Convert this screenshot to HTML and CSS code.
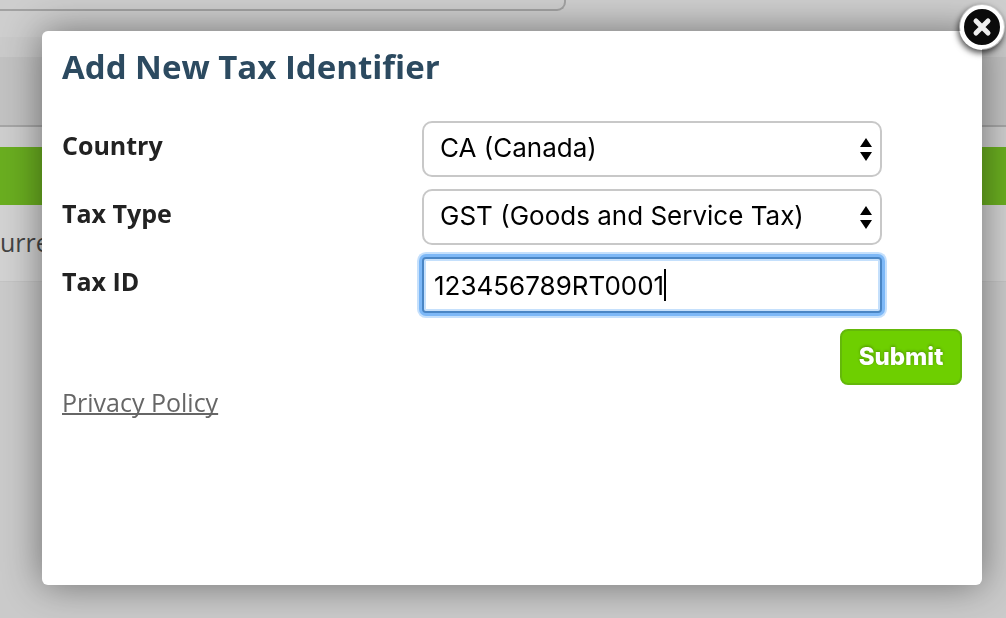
FILE: index.html
```
<!DOCTYPE html>
<html lang="en">
    <head>
        <title>Add New Tax Identifier</title>
        <meta charset="UTF-8">
        <meta name="viewport" content="width=device-width, initial-scale=1">
        <link rel="stylesheet" href="styles.css">
    </head>

    <body>
        <!-- page behind the dialog -->
        <div class="page" aria-hidden="true">
            <div class="searchBox"></div>
            <div class="toolbar"></div>
            <div class="greenBar"></div>
            <div class="currentRow">urrent</div>
        </div>

        <div class="overlay">
            <main class="dialog" role="dialog" aria-labelledby="dialogTitle">
                <button type="button" class="closeButton" aria-label="Close">
                    <svg viewBox="0 0 46 46" width="46" height="46">
                        <circle cx="23" cy="23" r="20" fill="#0b0b0b" stroke="#fff" stroke-width="4"/>
                        <path d="M17 17L29 29M29 17L17 29" stroke="#eee" stroke-width="5" stroke-linecap="round"/>
                    </svg>
                </button>

                <h1 id="dialogTitle">Add New Tax Identifier</h1>

                <form>
                    <div class="formRow">
                        <label for="country">Country</label>
                        <select id="country">
                            <option>CA (Canada)</option>
                        </select>
                    </div>
                    <div class="formRow">
                        <label for="taxType">Tax Type</label>
                        <select id="taxType">
                            <option>GST (Goods and Service Tax)</option>
                        </select>
                    </div>
                    <div class="formRow">
                        <label for="taxId">Tax ID</label>
                        <div class="textBox">
                            <input type="text" id="taxId" value="123456789RT0001">
                            <span class="caret"></span>
                        </div>
                    </div>
                    <div class="buttonRow">
                        <button type="submit" class="submitButton">Submit</button>
                    </div>
                </form>

                <a href="#" class="privacyLink">Privacy Policy</a>
            </main>
        </div>
    </body>
</html>
```
FILE: styles.css
```
*
{
    box-sizing: border-box;
}

html, body
{
    margin: 0;
    height: 100%;
    overflow: hidden;
    background-color: #cacaca;
    font-family: "Open Sans", "Noto Sans", sans-serif;
}

.page
{
    background-color: #cecece;
}

.searchBox
{
    width: 566px;
    height: 11px;
    border: 2px solid #a2a2a2;
    border-top: none;
    border-left: none;
    border-bottom-right-radius: 9px;
}

.toolbar
{
    height: 90px;
    margin-top: 26px;
    background: linear-gradient(#cacaca 20px, #c2c2c2 20px);
    border-bottom: 2px solid #a6a6a6;
}

.greenBar
{
    height: 58px;
    margin-top: 20px;
    background-color: #6aae20;
}

.currentRow
{
    height: 77px;
    padding-top: 20px;
    border-bottom: 1px solid #c4c4c4;
    background-color: #d2d2d2;
    color: #444;
    font-size: 25px;
    line-height: 34px;
}

.overlay
{
    position: fixed;
    inset: 0;
    display: flex;
    padding: 31px 24px 33px 42px;
}

.dialog
{
    position: relative;
    flex: 1;
    padding: 16px 20px;
    background-color: white;
    border-radius: 6px;
    box-shadow: 0 0 38px rgba(0, 0, 0, 0.46);
}

.closeButton
{
    position: absolute;
    top: -27px;
    right: -23px;
    width: 46px;
    height: 46px;
    padding: 0;
    border: none;
    border-radius: 50%;
    background: none;
    box-shadow: -1px 3px 6px rgba(0, 0, 0, 0.7);
    cursor: pointer;
}

.closeButton svg
{
    display: block;
}

h1
{
    margin: 0 0 34px;
    color: #2c4a60;
    font-size: 33px;
    line-height: 40px;
}

form
{
    display: flex;
    flex-direction: column;
    gap: 12px;
}

.formRow
{
    display: grid;
    grid-template-columns: 360px 460px;
}

.formRow label
{
    color: #222;
    font-size: 25px;
    font-weight: bold;
    line-height: 48px;
}

select, .textBox
{
    width: 100%;
    height: 56px;
    border: 2px solid #c8c8c8;
    border-radius: 10px;
    background-color: white;
    color: black;
    font-family: Inter, sans-serif;
    font-size: 26px;
}

select
{
    appearance: none;
    padding: 0 40px 4px 16px;
    background-image: url("data:image/svg+xml,%3Csvg xmlns='http://www.w3.org/2000/svg' width='12' height='24'%3E%3Cpath d='M6 1L12 10H0zM6 24L12 15H0z'/%3E%3C/svg%3E");
    background-repeat: no-repeat;
    background-position: right 8px center;
}

/* focused look */
.textBox
{
    display: flex;
    align-items: center;
    padding-left: 10px;
    border-color: #4a86c5;
    border-radius: 4px;
    box-shadow: 0 0 0 3px #7db8f7, 0 0 0 5px #c5e0fc, inset 0 0 0 2px #c5e0fc;
}

.textBox input
{
    field-sizing: content;
    padding: 0;
    border: none;
    outline: none;
    background: none;
    font: inherit;
}

.caret
{
    width: 2px;
    height: 32px;
    background-color: black;
}

.buttonRow
{
    display: flex;
    justify-content: flex-end;
    margin-top: 4px;
}

.submitButton
{
    width: 122px;
    height: 56px;
    padding: 0 0 2px;
    border: 2px solid #64b80a;
    border-radius: 8px;
    background-color: #6ecf00;
    color: white;
    font-family: Inter, sans-serif;
    font-size: 24px;
    font-weight: 800;
    text-shadow: 0 -1px 3px rgba(0, 0, 0, 0.3);
    cursor: pointer;
}

.privacyLink
{
    display: inline-block;
    color: #666;
    font-size: 25px;
    line-height: 34px;
    text-decoration-thickness: 2px;
    text-decoration-skip-ink: none;
}
```
